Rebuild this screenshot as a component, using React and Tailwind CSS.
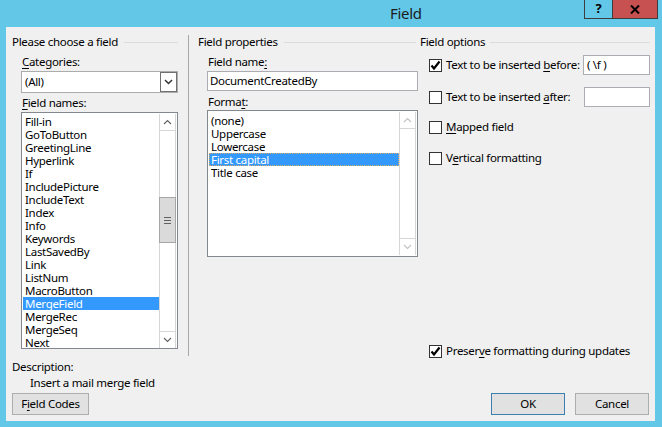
import React from 'react'

const fieldNames = [
  'Fill-in', 'GoToButton', 'GreetingLine', 'Hyperlink', 'If', 'IncludePicture', 'IncludeText', 'Index', 'Info',
  'Keywords', 'LastSavedBy', 'Link', 'ListNum', 'MacroButton', 'MergeField', 'MergeRec', 'MergeSeq', 'Next',
]
const formats = ['(none)', 'Uppercase', 'Lowercase', 'First capital', 'Title case']

const Chevron = ({ up, color }) => (
  <svg width="9" height="6" viewBox="0 0 9 6">
    <path d={up ? 'M1 5 L4.5 1.5 L8 5' : 'M1 1 L4.5 4.5 L8 1'} fill="none" stroke={color} strokeWidth="1.1" />
  </svg>
)

const ScrollBar = ({ disabled }) => {
  const arrow = disabled ? '#c2c2c2' : '#606060'
  return (
    <div className="w-[17px] flex flex-col border-x border-[#d6d6d6] bg-white">
      <div className="h-[17px] border-b border-[#d6d6d6] flex items-center justify-center">
        <Chevron up color={arrow} />
      </div>
      <div className="flex-1 flex flex-col">
        {!disabled && (
          <>
            <div className="h-[66px]" />
            <div className="h-[46px] mx-[-1px] bg-[#dadada] border border-[#a6a6a6] flex flex-col items-center justify-center gap-[2px]">
              <div className="w-[7px] h-px bg-[#606060]" />
              <div className="w-[7px] h-px bg-[#606060]" />
              <div className="w-[7px] h-px bg-[#606060]" />
            </div>
          </>
        )}
      </div>
      <div className="h-[17px] border-t border-[#d6d6d6] flex items-center justify-center">
        <Chevron color={arrow} />
      </div>
    </div>
  )
}

const CheckBox = ({ checked }) => (
  <span className="w-[13px] h-[13px] border border-[#333333] bg-white flex items-center justify-center shrink-0">
    {checked && (
      <svg width="11" height="11" viewBox="0 0 11 11">
        <path d="M1.5 5.5 L4 8.5 L9.5 1.5" fill="none" stroke="#000" strokeWidth="2.2" />
      </svg>
    )}
  </span>
)

const GroupTitle = ({ children, lineClass }) => (
  <div className="h-[14px] flex items-center">
    <span className="leading-[14px] whitespace-nowrap">{children}</span>
    <div className={`flex-1 h-px bg-[#dcdcdc] ${lineClass}`} />
  </div>
)

const U = ({ children }) => <span className="underline decoration-1 underline-offset-[2px]">{children}</span>

const Button = ({ children, className }) => (
  <div className={`h-[22px] bg-[#e1e1e1] border flex items-center justify-center ${className}`}>{children}</div>
)

export default function App() {
  return (
    <div
      className="w-[662px] h-[427px] bg-[#63c8e8] flex flex-col overflow-hidden text-[11.5px] tracking-[-0.3px] text-black"
      style={{ fontFamily: "'Noto Sans', sans-serif" }}
    >
      {/* title bar */}
      <div className="h-[27px] flex shrink-0">
        <div className="w-[390px]" />
        <span className="mt-[3px] text-[15px] leading-[20px] text-[#1b1b1b]">Field</span>
        <div className="flex-1" />
        <div className="flex h-[19px] mr-[4px] border-x border-b border-[#3d3d3d]">
          <div className="w-[28px] flex items-center justify-center font-bold text-[13px] border-r border-[#3d3d3d]">?</div>
          <div className="w-[44px] bg-[#c75050] flex items-center justify-center">
            <svg width="10" height="9" viewBox="0 0 10 9">
              <path d="M1 0.5 L9 8.5 M9 0.5 L1 8.5" stroke="#000" strokeWidth="2" />
            </svg>
          </div>
        </div>
      </div>

      {/* client area */}
      <div className="ml-[6px] w-[649px] h-[394px] bg-[#f0f0f0] flex flex-col">
        <div className="mt-[8px] flex items-start">
          {/* left group */}
          <div className="w-[183px] h-[321px] border-r border-[#a8a8a8] pl-[6px] pr-[10px] flex flex-col">
            <GroupTitle lineClass="ml-[6px]">Please choose a field</GroupTitle>
            <div className="mt-[6px] ml-[10px] leading-[14px]"><U>C</U>ategories:</div>
            <div className="mt-[2px] ml-[9px] w-[157px] h-[22px] border border-[#acacac] bg-white flex items-center">
              <span className="flex-1 pl-[3px]">(All)</span>
              <div className="w-[17px] h-[20px] border border-[#707070] flex items-center justify-center">
                <svg width="9" height="6" viewBox="0 0 9 6">
                  <path d="M1 1 L4.5 4.5 L8 1" fill="none" stroke="#333" strokeWidth="1.5" />
                </svg>
              </div>
            </div>
            <div className="mt-[3px] ml-[10px] leading-[14px]"><U>F</U>ield names:</div>
            <div className="mt-[2px] ml-[9px] w-[157px] h-[237px] border border-[#828790] bg-white pt-[1px] px-px flex">
              <div className="flex-1 overflow-hidden pt-px">
                {fieldNames.map((n) => (
                  <div
                    key={n}
                    className={`h-[13px] leading-[13px] pl-[2px] whitespace-nowrap ${n === 'MergeField' ? 'bg-[#3399ff] text-white' : ''}`}
                  >
                    {n}
                  </div>
                ))}
              </div>
              <ScrollBar />
            </div>
          </div>

          {/* middle group */}
          <div className="w-[229px] pl-[9px] flex flex-col">
            <GroupTitle lineClass="ml-[6px] mr-[2px]">Field properties</GroupTitle>
            <div className="mt-[6px] ml-[10px] leading-[14px]">Field name<U>:</U></div>
            <div className="mt-[2px] ml-[9px] w-[211px] h-[20px] border border-[#abadb3] bg-white flex items-center pl-[2px]">
              DocumentCreatedBy
            </div>
            <div className="mt-[4px] ml-[10px] leading-[14px]">Forma<U>t</U>:</div>
            <div className="mt-[1px] ml-[9px] w-[211px] h-[147px] border border-[#828790] bg-white pt-px pb-px px-px flex">
              <div className="flex-1 overflow-hidden pt-[2px]">
                {formats.map((f) => (
                  <div
                    key={f}
                    className={`h-[13px] leading-[11px] pl-[1px] border whitespace-nowrap ${
                      f === 'First capital'
                        ? 'bg-[#3399ff] text-white border-dotted border-[#d8a86a]'
                        : 'border-transparent'
                    }`}
                  >
                    {f}
                  </div>
                ))}
              </div>
              <ScrollBar disabled />
            </div>
          </div>

          {/* right group */}
          <div className="flex-1 h-[323px] pl-[2px] pr-[5px] flex flex-col">
            <GroupTitle lineClass="ml-[5px]">Field options</GroupTitle>
            <div className="mt-[6px] h-[20px] flex items-center pl-[9px]">
              <CheckBox checked />
              <span className="ml-[4px] whitespace-nowrap">Text to be inserted <U>b</U>efore:</span>
              <div className="ml-auto w-[67px] h-[20px] border border-[#abadb3] bg-white flex items-center pl-[3px]">( \f )</div>
            </div>
            <div className="mt-[12px] h-[20px] flex items-center pl-[9px]">
              <CheckBox />
              <span className="ml-[4px] whitespace-nowrap">Text to be inserted <U>a</U>fter:</span>
              <div className="ml-auto w-[66px] h-[20px] border border-[#abadb3] bg-white" />
            </div>
            <div className="mt-[10px] h-[20px] flex items-center pl-[9px]">
              <CheckBox />
              <span className="ml-[4px]"><U>M</U>apped field</span>
            </div>
            <div className="mt-[11px] h-[20px] flex items-center pl-[9px]">
              <CheckBox />
              <span className="ml-[4px]">V<U>e</U>rtical formatting</span>
            </div>
            <div className="mt-auto h-[14px] flex items-center pl-[9px]">
              <CheckBox checked />
              <span className="ml-[4px] whitespace-nowrap">Preser<U>v</U>e formatting during updates</span>
            </div>
          </div>
        </div>

        {/* bottom */}
        <div className="mt-[2px] pl-[6px] leading-[14px]">Description:</div>
        <div className="mt-[2px] pl-[24px] leading-[14px]">Insert a mail merge field</div>
        <div className="mt-[3px] px-[6px] flex">
          <Button className="w-[77px] border-[#adadad]">F<U>i</U>eld Codes</Button>
          <Button className="ml-auto w-[74px] border-[#3c7fb1]">OK</Button>
          <Button className="ml-[10px] w-[74px] border-[#adadad]">Cancel</Button>
        </div>
      </div>
    </div>
  )
}
